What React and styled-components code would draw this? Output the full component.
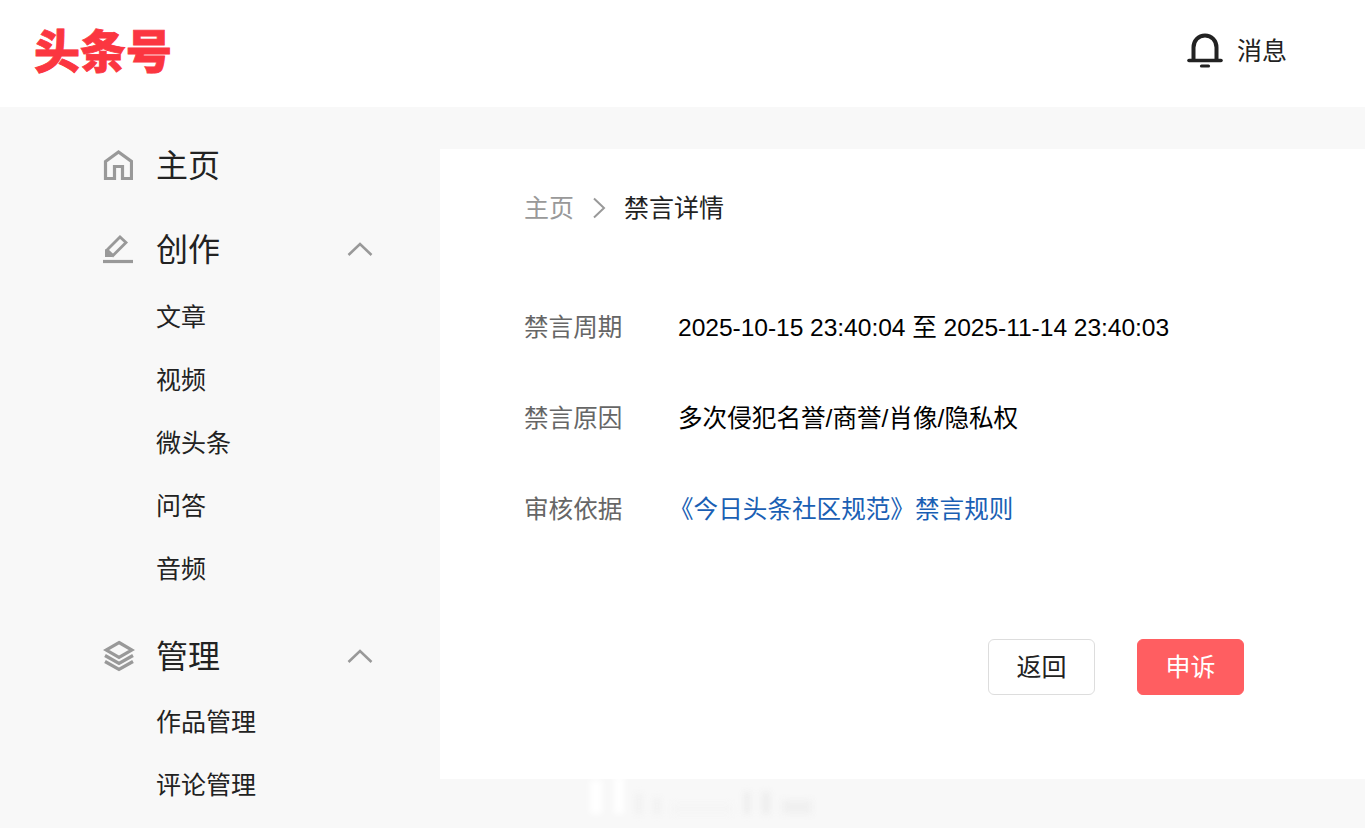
import React from "react";
import styled, { createGlobalStyle } from "styled-components";

const GlobalStyle = createGlobalStyle`
  html, body {
    margin: 0;
    padding: 0;
    height: 100%;
    overflow: hidden;
    background: #f8f8f8;
    font-family: "Liberation Sans", "Noto Sans CJK SC", sans-serif;
  }
`;

const Page = styled.div`
  position: relative;
  height: 828px;
  overflow: hidden;
  background: #f8f8f8;
`;

const Header = styled.header`
  display: flex;
  align-items: center;
  justify-content: space-between;
  height: 107px;
  padding: 0 78px 7px 34px;
  box-sizing: border-box;
  background: #fff;
`;

const Logo = styled.div`
  padding-bottom: 4px;
  font-family: "Noto Sans CJK SC", sans-serif;
  font-size: 46px;
  font-weight: 900;
  line-height: 56px;
  color: #fb3640;
  -webkit-text-stroke: 0.8px #fb3640;
`;

const Notice = styled.div`
  display: flex;
  align-items: center;
  gap: 14px;
  font-size: 25px;
  color: #222;
`;

const NoticeText = styled.span`
  padding-bottom: 2px;
`;

const Body = styled.div`
  display: flex;
  height: 721px;
`;

const Sidebar = styled.nav`
  flex: 0 0 440px;
  box-sizing: border-box;
  padding: 26px 67px 0 103px;
`;

const Group = styled.div`
  margin-bottom: 20px;
`;

const GroupHead = styled.div`
  display: flex;
  align-items: center;
  height: 64px;
  font-size: 32px;
  color: #222;
`;

const IconSlot = styled.span`
  display: flex;
  flex: 0 0 53px;
`;

const GroupTitle = styled.span`
  flex: 1;
  padding-bottom: 4px;
`;

const SubList = styled.div`
  padding: ${(p) => p.$top}px 0 ${(p) => 8 - p.$top}px 53px;
`;

const SubItem = styled.div`
  height: 63px;
  line-height: 63px;
  font-size: 25px;
  color: #222;
`;

const Card = styled.main`
  flex: 1;
  display: flex;
  flex-direction: column;
  box-sizing: border-box;
  height: 630px;
  margin-top: 42px;
  padding: 37px 121px 0 84px;
  background: #fff;
`;

const Crumbs = styled.div`
  display: flex;
  align-items: center;
  height: 44px;
  font-size: 25px;
  color: #222;
`;

const CrumbText = styled.span`
  padding-bottom: 4px;
  color: ${(p) => (p.$muted ? "#999" : "#222")};
`;

const CrumbSep = styled.span`
  display: flex;
  margin: 0 18px;
`;

const Details = styled.div`
  margin-top: 52px;
`;

const Row = styled.div`
  display: flex;
  align-items: center;
  box-sizing: border-box;
  height: 91px;
  padding-bottom: 6px;
  font-size: 24.6px;
`;

const Label = styled.span`
  flex: 0 0 154px;
  color: #666;
`;

const Value = styled.span`
  color: ${(p) => (p.$link ? "#1a5fb4" : "#000")};
  letter-spacing: ${(p) => (p.$tight ? "-0.05px" : "0")};
  text-indent: ${(p) => (p.$link ? "-9px" : "0")};
`;

const Actions = styled.div`
  display: flex;
  justify-content: flex-end;
  gap: 42px;
  margin-top: 84px;
`;

const Button = styled.button`
  width: 107px;
  height: 56px;
  padding: 0 0 4px;
  box-sizing: border-box;
  border: 1px solid ${(p) => (p.$primary ? "#ff5e61" : "#ddd")};
  border-radius: 6px;
  background: ${(p) => (p.$primary ? "#ff5e61" : "#fff")};
  color: ${(p) => (p.$primary ? "#fff" : "#222")};
  font-family: inherit;
  font-size: 25px;
`;

const Watermark = styled.div`
  position: absolute;
  left: 590px;
  top: 774px;
  display: flex;
  align-items: flex-end;
  gap: 12px;
  height: 40px;
  filter: blur(3px);
`;

const Blot = styled.span`
  display: block;
  width: ${(p) => p.$w}px;
  height: ${(p) => p.$h}px;
  background: ${(p) => p.$c || "#fff"};
`;

const HomeIcon = () => (
  <svg width="30" height="30" viewBox="0 0 30 30" fill="none" stroke="#999" strokeWidth="3.200">
    <path d="M2.500 28.500V11.500L15.500 2l13 9.500v17h-9V16.500h-8v12z" />
  </svg>
);

const PenIcon = () => (
  <svg width="30" height="30" viewBox="0 0 30 30" fill="none" stroke="#999">
    <path d="M4 16L17 3l6 5.500L10 21.500z" strokeWidth="2.800" />
    <path d="M2 15l8 8H2z" fill="#999" stroke="none" />
    <path d="M0 27.500h30" strokeWidth="3.200" />
  </svg>
);

const LayersIcon = () => (
  <svg width="32" height="32" viewBox="0 0 32 32" fill="none" stroke="#999" strokeWidth="3.200">
    <path d="M16 2.500L29 10 16 17.500 3 10z" />
    <path d="M2 15.500l14 8 14-8" />
    <path d="M2 21.500l14 8 14-8" />
  </svg>
);

const Chevron = () => (
  <svg width="26" height="14" viewBox="0 0 26 14" fill="none" stroke="#999" strokeWidth="2.500">
    <path d="M1.500 13L13 2l11.500 11" />
  </svg>
);

const CrumbArrow = () => (
  <svg width="14" height="22" viewBox="0 0 14 22" fill="none" stroke="#999" strokeWidth="2">
    <path d="M2 1.500L12 11 2 20.500" />
  </svg>
);

const BellIcon = () => (
  <svg width="36" height="36" viewBox="0 0 36 36" fill="none" stroke="#222" strokeLinecap="round">
    <path d="M6.500 27V15.500C6.500 8.500 11.500 3.500 18 3.500s11.500 5 11.500 12V27" strokeWidth="4" />
    <path d="M2 28.500h32" strokeWidth="3.600" />
    <path d="M14.500 34h7" strokeWidth="3.200" />
  </svg>
);

const creationItems = ["文章", "视频", "微头条", "问答", "音频"];
const manageItems = ["作品管理", "评论管理"];

const details = [
  { label: "禁言周期", value: "2025-10-15 23:40:04 至 2025-11-14 23:40:03", tight: true },
  { label: "禁言原因", value: "多次侵犯名誉/商誉/肖像/隐私权" },
  { label: "审核依据", value: "《今日头条社区规范》禁言规则", link: true },
];

export default function App() {
  return (
    <Page>
      <GlobalStyle />
      <Header>
        <Logo>头条号</Logo>
        <Notice>
          <BellIcon />
          <NoticeText>消息</NoticeText>
        </Notice>
      </Header>
      <Body>
        <Sidebar>
          <Group>
            <GroupHead>
              <IconSlot><HomeIcon /></IconSlot>
              <GroupTitle>主页</GroupTitle>
            </GroupHead>
          </Group>
          <Group>
            <GroupHead>
              <IconSlot><PenIcon /></IconSlot>
              <GroupTitle>创作</GroupTitle>
              <Chevron />
            </GroupHead>
            <SubList $top={5}>
              {creationItems.map((item) => (
                <SubItem key={item}>{item}</SubItem>
              ))}
            </SubList>
          </Group>
          <Group>
            <GroupHead>
              <IconSlot><LayersIcon /></IconSlot>
              <GroupTitle>管理</GroupTitle>
              <Chevron />
            </GroupHead>
            <SubList $top={3}>
              {manageItems.map((item) => (
                <SubItem key={item}>{item}</SubItem>
              ))}
            </SubList>
          </Group>
        </Sidebar>
        <Card>
          <Crumbs>
            <CrumbText $muted>主页</CrumbText>
            <CrumbSep><CrumbArrow /></CrumbSep>
            <CrumbText>禁言详情</CrumbText>
          </Crumbs>
          <Details>
            {details.map((row) => (
              <Row key={row.label}>
                <Label>{row.label}</Label>
                <Value $link={row.link} $tight={row.tight}>{row.value}</Value>
              </Row>
            ))}
          </Details>
          <Actions>
            <Button>返回</Button>
            <Button $primary>申诉</Button>
          </Actions>
        </Card>
      </Body>
      <Watermark>
        <Blot $w={12} $h={34} />
        <Blot $w={10} $h={38} />
        <Blot $w={6} $h={20} $c="#f1f1f1" />
        <Blot $w={6} $h={16} $c="#f1f1f1" />
        <Blot $w={60} $h={10} $c="#f5f5f5" />
        <Blot $w={6} $h={22} $c="#ededed" />
        <Blot $w={8} $h={22} $c="#ededed" />
        <Blot $w={30} $h={14} $c="#f0f0f0" />
      </Watermark>
    </Page>
  );
}
